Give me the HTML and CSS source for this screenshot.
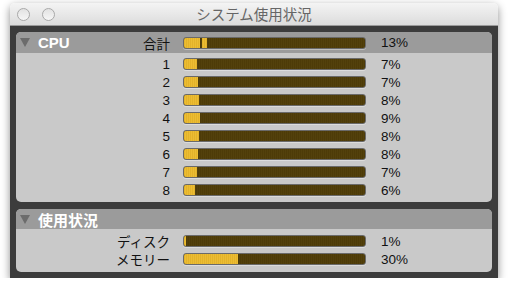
FILE: index.html
```html
<!DOCTYPE html>
<html>
<head>
    <title>システム使用状況</title>
    <link rel="stylesheet" href="styles.css">
</head>
<body>
    <div class="window">
        <div class="titlebar">
            <div class="lights">
                <span class="light"></span>
                <span class="light"></span>
            </div>
            <div class="title">システム使用状況</div>
        </div>

        <div class="frame">
            <div class="panel">
                <div class="panel-head row">
                    <div class="label head-label">
                        <span class="section"><span class="arrow"></span>CPU</span>
                        <span>合計</span>
                    </div>
                    <div class="bar">
                        <span class="fill" style="width: 16px"></span>
                        <span class="gap"></span>
                        <span class="fill" style="width: 5px"></span>
                    </div>
                    <div class="pct">13%</div>
                </div>
                <div class="panel-body">
                    <div class="row"><div class="label">1</div><div class="bar"><span class="fill" style="width: 13px"></span></div><div class="pct">7%</div></div>
                    <div class="row"><div class="label">2</div><div class="bar"><span class="fill" style="width: 14px"></span></div><div class="pct">7%</div></div>
                    <div class="row"><div class="label">3</div><div class="bar"><span class="fill" style="width: 15px"></span></div><div class="pct">8%</div></div>
                    <div class="row"><div class="label">4</div><div class="bar"><span class="fill" style="width: 16px"></span></div><div class="pct">9%</div></div>
                    <div class="row"><div class="label">5</div><div class="bar"><span class="fill" style="width: 15px"></span></div><div class="pct">8%</div></div>
                    <div class="row"><div class="label">6</div><div class="bar"><span class="fill" style="width: 14px"></span></div><div class="pct">8%</div></div>
                    <div class="row"><div class="label">7</div><div class="bar"><span class="fill" style="width: 13px"></span></div><div class="pct">7%</div></div>
                    <div class="row"><div class="label">8</div><div class="bar"><span class="fill" style="width: 11px"></span></div><div class="pct">6%</div></div>
                </div>
            </div>

            <div class="panel">
                <div class="panel-head">
                    <span class="section"><span class="arrow"></span>使用状況</span>
                </div>
                <div class="panel-body usage">
                    <div class="row"><div class="label">ディスク</div><div class="bar"><span class="fill" style="width: 2px"></span></div><div class="pct">1%</div></div>
                    <div class="row"><div class="label">メモリー</div><div class="bar"><span class="fill" style="width: 54px"></span></div><div class="pct">30%</div></div>
                </div>
            </div>
        </div>
    </div>
</body>
</html>
```

FILE: styles.css
```css
body {
    margin: 0;
    background: #ffffff;
    font-family: "Liberation Sans", "Noto Sans CJK JP", sans-serif;
    font-size: 13.5px;
    color: #111;
}
.window {
    width: 488px;
    margin: 3px 0 0 10px;
    border-radius: 5px 5px 0 0;
    box-shadow: 0 3px 9px rgba(0, 0, 0, 0.45);
}
.titlebar {
    height: 22px;
    display: flex;
    align-items: center;
    position: relative;
    background: linear-gradient(#f4f4f4, #dcdcdc);
    border-radius: 5px 5px 0 0;
    border-bottom: 1px solid #9a9a9a;
}
.lights {
    display: flex;
    gap: 12px;
    margin-left: 7px;
}
.light {
    width: 11px;
    height: 11px;
    border-radius: 50%;
    border: 1px solid #a9a9a9;
    background: linear-gradient(#e2e2e2, #f6f6f6);
}
.title {
    position: absolute;
    left: 0;
    right: 0;
    text-align: center;
    font-family: "Noto Sans CJK JP", sans-serif;
    font-size: 14.5px;
    color: #666;
    line-height: 22px;
}
.frame {
    background: #3c3c3c;
    padding: 6px;
    display: flex;
    flex-direction: column;
    gap: 7px;
}
.panel {
    background: #c9c9c9;
    border-radius: 5px;
    overflow: hidden;
}
.panel-head {
    background: #9b9b9b;
    height: 20px;
    display: flex;
    align-items: center;
}
.panel-head.row {
    height: 21px;
}
.section {
    display: flex;
    align-items: center;
    color: #ffffff;
    font-weight: bold;
    font-size: 15px;
    padding-left: 4px;
}
.arrow {
    width: 0;
    height: 0;
    border-left: 5px solid transparent;
    border-right: 5px solid transparent;
    border-top: 9px solid #6c6c6c;
    margin-right: 8px;
}
.panel-body {
    padding: 2px 0 3px;
}
.panel-body.usage {
    padding: 3px 0 4px;
}
.row {
    display: flex;
    align-items: center;
    height: 18px;
}
.label {
    width: 154px;
    text-align: right;
}
.head-label {
    display: flex;
    justify-content: space-between;
    align-items: center;
}
.bar {
    width: 181px;
    height: 10px;
    margin-left: 13px;
    display: flex;
    border: 1px solid #6a6a6a;
    border-radius: 3px;
    overflow: hidden;
    background: repeating-linear-gradient(90deg, #4d3b08 0 1px, #53410c 1px 2px);
    box-shadow: 0 1px 0 rgba(255, 255, 255, 0.35);
}
.fill {
    height: 100%;
    background: repeating-linear-gradient(90deg, #e3b22a 0 1px, #ecbd33 1px 2px);
}
.gap {
    width: 2px;
    height: 100%;
}
.pct {
    margin-left: 15px;
}
```
